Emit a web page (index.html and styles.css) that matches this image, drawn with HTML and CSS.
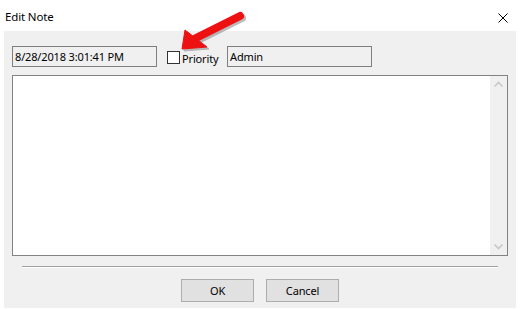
FILE: index.html
```html
<!DOCTYPE html>
<html>
<head>
<meta charset="utf-8">
<link rel="stylesheet" href="styles.css">
</head>
<body>
<div class="window">
  <div class="titlebar">
    <span class="title">Edit Note</span>
    <svg class="close" width="12" height="12" viewBox="0 0 12 12"><path d="M1.5 1.5L10.5 10.5M10.5 1.5L1.5 10.5" stroke="#000" stroke-width="1" fill="none"/></svg>
  </div>
  <div class="client">
    <div class="toprow">
      <div class="field">8/28/2018 3:01:41 PM</div>
      <label class="check"><span class="box"></span><span class="label">Priority</span></label>
      <div class="field">Admin</div>
    </div>
    <div class="memo">
      <div class="memo-text"></div>
      <div class="scrollbar">
        <svg width="17" height="17" viewBox="0 0 17 17"><path d="M4.5 10.5L8.5 6.5L12.5 10.5" stroke="#c8c8c8" stroke-width="1.6" fill="none"/></svg>
        <svg width="17" height="17" viewBox="0 0 17 17"><path d="M4.5 6.5L8.5 10.5L12.5 6.5" stroke="#c8c8c8" stroke-width="1.6" fill="none"/></svg>
      </div>
    </div>
    <div class="separator"></div>
    <div class="buttons">
      <button class="btn">OK</button>
      <button class="btn">Cancel</button>
    </div>
  </div>
  <svg class="arrow" width="85" height="50" viewBox="0 0 85 50">
    <g fill="#7a7a7a" stroke="#7a7a7a" opacity="0.5" transform="translate(2,2)">
      <line x1="26" y1="33" x2="70" y2="11" stroke-width="8" stroke-linecap="round"/>
      <polygon points="12,44 15,25 37,42" stroke-width="1"/>
    </g>
    <g fill="#ee1111" stroke="#ee1111">
      <line x1="26" y1="33" x2="70" y2="11" stroke-width="8" stroke-linecap="round"/>
      <polygon points="12,44 15,25 37,42" stroke-width="1" stroke-linejoin="round"/>
    </g>
  </svg>
</div>
</body>
</html>
```
FILE: styles.css
```css
html, body {
  margin: 0;
  padding: 0;
  background: #ffffff;
}
body {
  font-family: "Noto Sans", "Open Sans", sans-serif;
  font-size: 11px;
  letter-spacing: -0.15px;
  color: #000;
}
.window {
  position: relative;
  width: 520px;
  height: 309px;
  overflow: hidden;
}
.titlebar {
  height: 31px;
  display: flex;
  align-items: center;
  justify-content: space-between;
  padding: 0 11px 0 5px;
  box-sizing: border-box;
}
.title {
  font-size: 11.5px;
  margin-top: 2px;
}
.close {
  display: block;
  margin-top: 4px;
}
.client {
  margin: 0 4px;
  height: 277px;
  background: #f0f0f0;
  box-sizing: border-box;
  padding: 15px 8px 0 8px;
  display: flex;
  flex-direction: column;
}
.toprow {
  display: flex;
  align-items: center;
  height: 21px;
}
.field {
  width: 145px;
  height: 21px;
  box-sizing: border-box;
  border: 1px solid #7f7f7f;
  padding: 0 2px;
  line-height: 19px;
  white-space: nowrap;
}
.check {
  display: flex;
  align-items: center;
  margin-left: 10px;
  width: 60px;
  height: 21px;
}
.box {
  width: 13px;
  height: 13px;
  box-sizing: border-box;
  border: 1px solid #333;
  background: #fff;
  margin-top: 2px;
}
.label {
  margin-left: 2px;
  margin-top: 4px;
}
.memo {
  margin-top: 8px;
  width: 496px;
  height: 181px;
  box-sizing: border-box;
  border: 1px solid #828282;
  background: #fff;
  display: flex;
}
.memo-text {
  flex: 1;
}
.scrollbar {
  width: 17px;
  background: #f0f0f0;
  display: flex;
  flex-direction: column;
  justify-content: space-between;
}
.scrollbar svg {
  display: block;
}
.separator {
  margin: 10px 10px 0 10px;
  height: 1px;
  background: #a0a0a0;
  border-bottom: 1px solid #ffffff;
}
.buttons {
  margin-top: 11px;
  display: flex;
  justify-content: center;
  gap: 12px;
}
.btn {
  width: 73px;
  height: 23px;
  box-sizing: border-box;
  border: 1px solid #adadad;
  background: #e1e1e1;
  font-family: "Noto Sans", "Open Sans", sans-serif;
  font-size: 11px;
  letter-spacing: -0.15px;
  color: #000;
  padding: 0;
  margin: 0;
}
.arrow {
  position: absolute;
  left: 170px;
  top: 5px;
}
```
